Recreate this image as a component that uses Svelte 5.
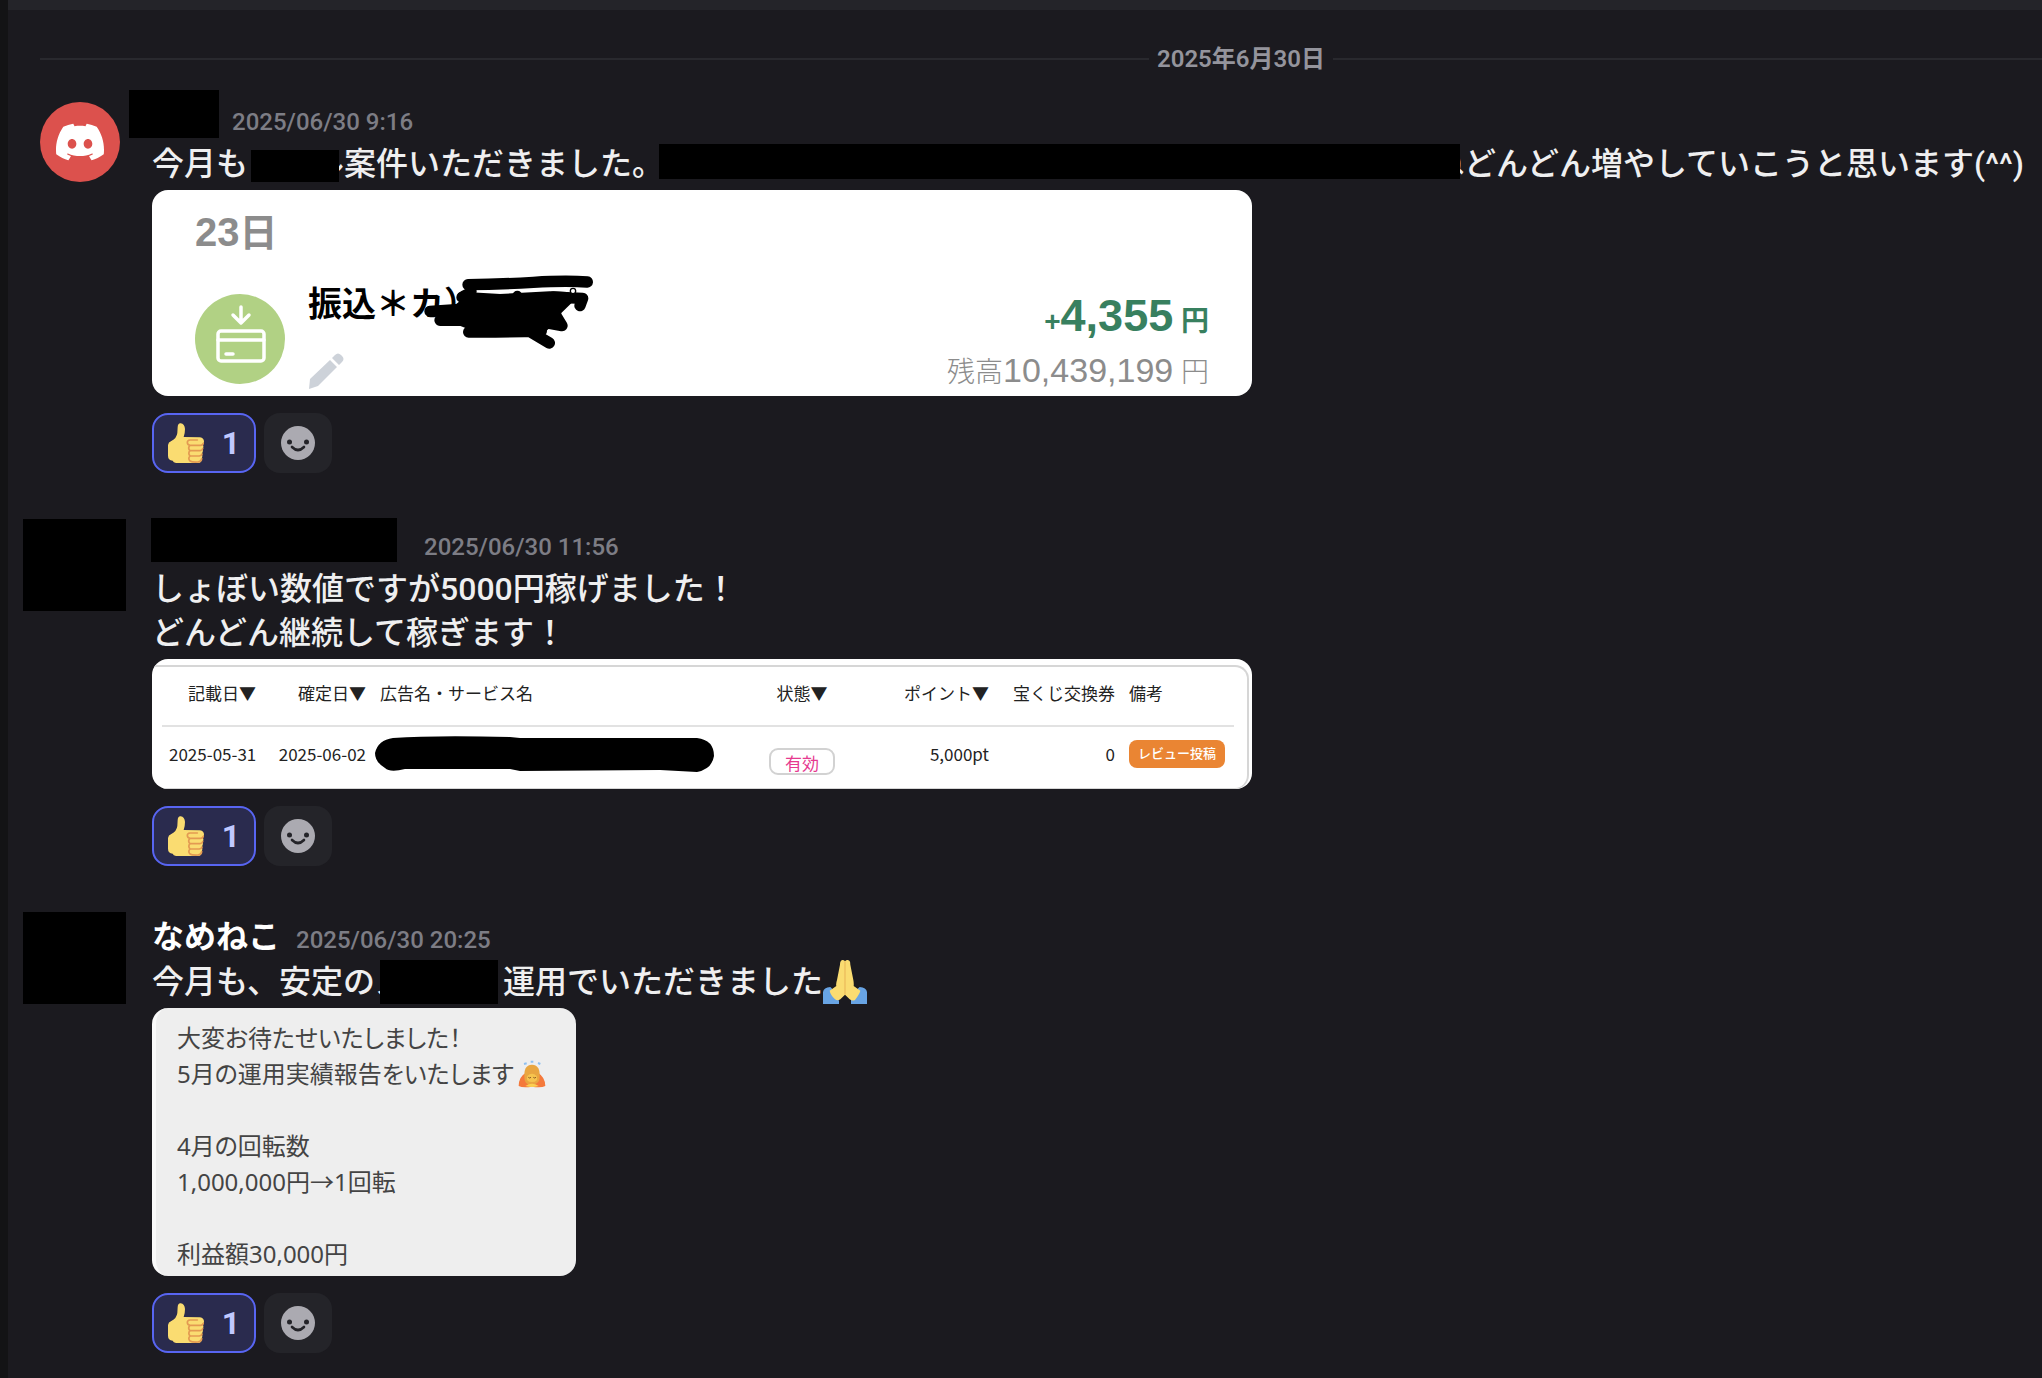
<script>
  let messages = $state([
    { id: 1, time: "2025/06/30 9:16", name: "", likes: 1 },
    { id: 2, time: "2025/06/30 11:56", name: "", likes: 1 },
    { id: 3, time: "2025/06/30 20:25", name: "なめねこ", likes: 1 },
  ]);

  const report = [
    "大変お待たせいたしました！",
    "5月の運用実績報告をいたします",
    "",
    "4月の回転数",
    "1,000,000円→1回転",
    "",
    "利益額30,000円",
  ];
</script>

{#snippet thumb()}
  <svg class="thumb" viewBox="0 0 108 120" aria-hidden="true">
    <path
      fill="#fadc71"
      d="M29 12Q30 0 38 1Q50 3 51 18Q51 32 47 42L96 43Q108 45 108 56Q107 62 105 64Q108 72 104 78Q107 86 102 92Q104 98 102 104Q103 119 90 120L24 120Q16 119 14 113Q0 112 0 98L0 66Q1 57 10 54Q26 46 28 30Z"
    />
    <path
      fill="none"
      stroke="#e39a52"
      stroke-width="5"
      stroke-linecap="round"
      d="M88 51H66Q58 52 58 58Q58 66 66 67H98Q104 67 106 61M66 67Q58 75 66 83H96Q103 82 104 77M66 83Q59 90 66 99H94Q101 98 102 93M66 99Q59 106 66 114Q72 118 90 117Q100 116 101 107"
    />
  </svg>
{/snippet}

{#snippet head(m)}
  <header class="head">
    <h2 class="name name{m.id}">{m.name}</h2>
    <time>{m.time}</time>
  </header>
{/snippet}

{#snippet reactions(m)}
  <div class="reactions">
    <button class="reaction" onclick={() => m.likes++}>
      {@render thumb()}
      <span>{m.likes}</span>
    </button>
    <button class="add" aria-label="リアクションを付ける">
      <svg viewBox="0 0 34 34" width="34" height="34">
        <circle cx="17" cy="17" r="17" fill="#abaab1" />
        <circle cx="8.5" cy="16" r="2.5" fill="#242429" />
        <circle cx="25.5" cy="16" r="2.5" fill="#242429" />
        <path d="M11 21q6 6 12 0" fill="none" stroke="#242429" stroke-width="2.6" stroke-linecap="round" />
      </svg>
    </button>
  </div>
{/snippet}

<main>
  <div class="divider"><span>2025年6月30日</span></div>

  <article class="message">
    <div class="avatar discord">
      <svg viewBox="0 0 24 24" width="48" height="48" fill="#fff">
        <path
          d="M20.317 4.3698a19.7913 19.7913 0 00-4.8851-1.5152.0741.0741 0 00-.0785.0371c-.211.3753-.4447.8648-.6083 1.2495-1.8447-.2762-3.68-.2762-5.4868 0-.1636-.3933-.4058-.8742-.6177-1.2495a.077.077 0 00-.0785-.037 19.7363 19.7363 0 00-4.8852 1.515.0699.0699 0 00-.0321.0277C.5334 9.0458-.319 13.5799.0992 18.0578a.0824.0824 0 00.0312.0561c2.0528 1.5076 4.0413 2.4228 5.9929 3.0294a.0777.0777 0 00.0842-.0276c.4616-.6304.8731-1.2952 1.226-1.9942a.076.076 0 00-.0416-.1057c-.6528-.2476-1.2743-.5495-1.8722-.8923a.077.077 0 01-.0076-.1277c.1258-.0943.2517-.1923.3718-.2914a.0743.0743 0 01.0776-.0105c3.9278 1.7933 8.18 1.7933 12.0614 0a.0739.0739 0 01.0785.0095c.1202.099.246.1981.3728.2924a.077.077 0 01-.0066.1276 12.2986 12.2986 0 01-1.873.8914.0766.0766 0 00-.0407.1067c.3604.698.7719 1.3628 1.225 1.9932a.076.076 0 00.0842.0286c1.961-.6067 3.9495-1.5219 6.0023-3.0294a.077.077 0 00.0313-.0552c.5004-5.177-.8382-9.6739-3.5485-13.6604a.061.061 0 00-.0312-.0286zM8.02 15.3312c-1.1825 0-2.1569-1.0857-2.1569-2.419 0-1.3332.9555-2.4189 2.157-2.4189 1.2108 0 2.1757 1.0952 2.1568 2.419 0 1.3332-.9555 2.4189-2.1569 2.4189zm7.9748 0c-1.1825 0-2.1569-1.0857-2.1569-2.419 0-1.3332.9554-2.4189 2.1569-2.4189 1.2108 0 2.1757 1.0952 2.1568 2.419 0 1.3332-.946 2.4189-2.1568 2.4189Z"
        />
      </svg>
    </div>
    <div class="body">
      {@render head(messages[0])}
      <p>今月も<span class="bar bar-short"></span>ル案件いただきました。<span class="bar bar-long"></span>ねどんどん増やしていこうと思います(^^)</p>
      <section class="attachment deposit">
        <h3>23<span>日</span></h3>
        <div class="deposit-row">
          <svg class="card-icon" viewBox="0 0 90 90" fill="none" stroke="#fff" stroke-width="3.5" stroke-linecap="round" stroke-linejoin="round">
            <circle cx="45" cy="45" r="45" fill="#b1d184" stroke="none" />
            <path d="M46 13v15M38 21l8 8 8-8" />
            <rect x="23" y="37" width="46" height="30" rx="3" />
            <path d="M23 46h46M31 60h7" />
          </svg>
          <div class="payee">
            <div class="payee-name">
              振込＊カ）
              <svg class="scribble" viewBox="60 30 540 240" fill="none" stroke="#000" stroke-width="34" stroke-linecap="round" stroke-linejoin="round">
                <path d="M204 65Q300 64 400 58T562 57" />
                <path d="M186 103L300 110L450 102L548 106L540 128" />
                <path d="M90 145L200 138L300 128L470 116" />
                <path d="M120 172H300L460 145L486 188L400 172" />
                <path d="M206 207Q300 208 424 204L300 185M380 200L448 240" />
                <path d="M190 98L215 85M352 98L352 104M460 100L500 102" stroke-width="30" />
                <path d="M190 105H530L484 150 478 170 436 206 210 200 120 165Z" fill="#000" stroke="none" />
                <circle cx="519" cy="84" r="8" stroke-width="4" fill="#fff" />
              </svg>
            </div>
            <svg class="pencil" viewBox="0 0 36 36" fill="#cdd2d9">
              <path d="M22 7l7 7L10 33 1 36l1-10zM24 5l3-3q3-3 6 0l1 1q3 3 0 6l-3 3z" />
            </svg>
          </div>
          <div class="amounts">
            <div class="amount"><small>+</small>4,355<span>&nbsp;円</span></div>
            <div class="balance"><span>残高</span>10,439,199<span>&nbsp;円</span></div>
          </div>
        </div>
      </section>
      {@render reactions(messages[0])}
    </div>
  </article>

  <article class="message">
    <div class="avatar hidden"></div>
    <div class="body">
      {@render head(messages[1])}
      <p>しょぼい数値ですが5000円稼げました！<br />どんどん継続して稼ぎます！</p>
      <section class="attachment points">
        <div class="points-inner">
          <table>
            <thead>
              <tr>
                <th class="c1">記載日▼</th>
                <th class="c2">確定日▼</th>
                <th class="c3 left">広告名・サービス名</th>
                <th class="c4 center">状態▼</th>
                <th class="c5">ポイント▼</th>
                <th class="c6">宝くじ交換券</th>
                <th class="c7 left">備考</th>
              </tr>
            </thead>
            <tbody>
              <tr>
                <td>2025-05-31</td>
                <td>2025-06-02</td>
                <td class="left service">
                  <svg viewBox="0 0 339 36" width="339" height="36">
                    <path d="M18 2Q60-1 135 1L145 2H285L322 2Q339 4 339 20Q337 33 322 36L285 34L145 35L135 33H30Q15 37 10 32Q0 26 0 17Q3 4 18 2Z" />
                  </svg>
                </td>
                <td class="center"><span class="status">有効</span></td>
                <td>5,000pt</td>
                <td>0</td>
                <td class="left"><button class="review">レビュー投稿</button></td>
              </tr>
            </tbody>
          </table>
        </div>
      </section>
      {@render reactions(messages[1])}
    </div>
  </article>

  <article class="message">
    <div class="avatar hidden"></div>
    <div class="body">
      {@render head(messages[2])}
      <p>今月も、安定のス<span class="bar bar-mid"></span>運用でいただきました<svg class="pray" viewBox="0 0 132 132" width="44" height="44">
          <path fill="#68a4e4" d="M0 132V96Q2 82 22 81L46 104V132H36Q42 126 48 120V132ZM132 132V96Q130 82 110 81L84 104V132Z" />
          <path fill="#fadc71" d="M66 4Q71-3 79 2Q82 4 82 14L91 60Q93 70 92 78L112 92Q112 98 96 120Q88 124 80 118L66 104L52 118Q44 124 36 118Q22 104 20 92L40 78Q38 72 42 60L51 14Q51 2 58 0Q64 0 66 4Z" />
          <path fill="none" stroke="#e8b357" stroke-width="3" d="M66 4V104" />
        </svg></p>
      <section class="attachment report">
        {#each report as line, i}
          <div class="line">
            {line}{#if i == 1}<svg class="bow" viewBox="0 0 84 84" width="28" height="28">
                <path d="M18 12l8-2M38 5h8M60 9l7 3" stroke="#8fc0f0" stroke-width="6" />
                <path d="M2 78Q2 50 24 38L42 60 60 38Q82 52 82 78Q70 84 42 80Q14 84 2 78Z" fill="#f4793b" />
                <path d="M20 60Q14 14 42 14T64 60Q60 72 42 74T20 60Z" fill="#e9a640" />
                <path d="M28 48Q42 34 56 48Q62 66 42 66T28 48Z" fill="#f6c44e" />
                <path d="M31 52q4 4 8 0M46 52q4 4 8 0" fill="none" stroke="#8a5a28" stroke-width="3" />
                <path d="M22 78Q42 64 62 78Q42 84 22 78Z" fill="#fbcf50" />
              </svg>{/if}
          </div>
        {/each}
      </section>
      {@render reactions(messages[2])}
    </div>
  </article>
</main>

<style>
  :global(body) {
    margin: 0;
    background: #1b1a1f;
  }
  main {
    border-left: 8px solid #131315;
    box-shadow: inset 0 10px #242429;
    min-height: 100vh;
    box-sizing: border-box;
    padding: 37px 0 0 32px;
    background: #1b1a1f;
    color: #efeff0;
    font-family: Roboto, "Noto Sans CJK JP", sans-serif;
    overflow: hidden;
  }
  .divider {
    display: flex;
    align-items: center;
    gap: 8px;
    height: 44px;
    font-size: 24px;
    font-weight: 600;
    color: #94949c;
  }
  .divider span {
    padding-bottom: 6px;
  }
  .divider::before,
  .divider::after {
    content: "";
    flex: 61;
    height: 2px;
    background: #29292e;
  }
  .divider::after {
    flex: 39;
  }

  .message {
    display: flex;
    gap: 32px;
    margin-bottom: 48px;
  }
  .divider + .message {
    margin-top: 15px;
  }
  .avatar {
    flex: none;
    width: 80px;
    height: 80px;
    margin-top: 6px;
    position: relative;
  }
  .discord {
    display: grid;
    place-items: center;
    border-radius: 50%;
    background: #dc514d;
  }
  .hidden::after {
    content: "";
    position: absolute;
    inset: -8px -6px -4px -17px;
    background: #000;
  }
  .body {
    flex: 1;
    min-width: 0;
  }

  .head {
    display: flex;
    align-items: baseline;
    gap: 16px;
    height: 46px;
  }
  .name {
    position: relative;
    margin: 0;
    height: 46px;
    font-size: 32px;
    line-height: 46px;
    font-weight: 600;
    color: #fff;
  }
  .name:empty::before {
    content: "\200b";
  }
  .name1 {
    width: 64px;
  }
  .name2 {
    width: 256px;
  }
  /* masked user names */
  .name1::after,
  .name2::after {
    content: "";
    position: absolute;
    background: #000;
    inset: -6px -3px 4px -23px;
  }
  .name2::after {
    inset: -3px 11px 5px -1px;
  }
  time {
    font-size: 24px;
    font-weight: 500;
    color: #7d7d85;
  }
  p {
    margin: 0;
    font-size: 32px;
    line-height: 44px;
    font-weight: 500;
    white-space: nowrap;
  }
  .bar {
    display: inline-block;
    position: relative;
    vertical-align: top;
    background: #000;
  }
  .bar-short {
    width: 88px;
    height: 32px;
    margin: 8px -27px 0 3px;
  }
  .bar-long {
    width: 801px;
    height: 35px;
    margin: 2px -28px 0 -5px;
  }
  .bar-mid {
    width: 118px;
    height: 44px;
    margin: 0 5px 0 -27px;
  }
  .pray {
    vertical-align: top;
  }

  .attachment {
    box-sizing: border-box;
    width: 1100px;
    max-width: 100%;
    margin-top: 4px;
    border-radius: 16px;
    overflow: hidden;
    background: #fff;
  }

  .deposit {
    height: 206px;
    padding: 17px 43px 0;
    color: #8c8c8c;
    font-family: "Liberation Sans", "Noto Sans CJK JP", sans-serif;
  }
  .deposit h3 {
    margin: 0 0 28px;
    font-size: 40px;
    line-height: 50px;
  }
  .deposit h3 span {
    font-size: 38px;
  }
  .deposit-row {
    display: flex;
    gap: 23px;
  }
  .card-icon {
    width: 90px;
    height: 90px;
    margin-top: 8px;
  }
  .payee {
    flex: 1;
  }
  .payee-name {
    position: relative;
    font-family: "Noto Sans CJK JP", sans-serif;
    font-size: 34px;
    line-height: 32px;
    font-weight: bold;
    color: #000;
  }
  .scribble {
    position: absolute;
    left: 112px;
    top: -13px;
    width: 180px;
    height: 80px;
  }
  .pencil {
    display: block;
    width: 36px;
    height: 36px;
    margin-top: 35px;
  }
  .amounts {
    text-align: right;
  }
  .amount {
    height: 60px;
    font-size: 45px;
    line-height: 60px;
    font-weight: bold;
    color: #38805f;
  }
  .amount small,
  .amount span,
  .balance span {
    font-size: 28px;
  }
  .balance {
    font-size: 34px;
    line-height: 48px;
  }
  .balance span {
    font-weight: 300;
  }

  .points {
    height: 130px;
    padding: 6px 3px 0 0;
    color: #222;
    font-family: "Noto Sans CJK JP", sans-serif;
    font-size: 17px;
  }
  .points-inner {
    box-sizing: border-box;
    height: 124px;
    padding: 0 13px 0 10px;
    border: solid #d6d6d6;
    border-width: 2px 2px 1px 0;
    border-radius: 0 14px 14px 0;
  }
  table {
    width: 100%;
    table-layout: fixed;
    border-collapse: collapse;
  }
  th,
  td {
    padding: 0 7px;
    font-weight: normal;
    text-align: right;
    white-space: nowrap;
    line-height: 24px;
  }
  th {
    height: 51px;
    padding-bottom: 7px;
    border-bottom: 2px solid #e2e2e2;
    box-sizing: content-box;
  }
  td {
    height: 54px;
  }
  .left {
    text-align: left;
  }
  .center {
    text-align: center;
  }
  .c1 {
    width: 87px;
  }
  .c2 {
    width: 96px;
  }
  .c3 {
    width: 364px;
  }
  .c4 {
    width: 88px;
  }
  .c5 {
    width: 129px;
  }
  .c6 {
    width: 112px;
  }
  .service {
    padding-left: 2px;
  }
  .service svg,
  .review {
    display: block;
  }
  .status {
    display: inline-block;
    box-sizing: border-box;
    width: 66px;
    height: 27px;
    margin-top: 14px;
    border: 2px solid #d2d2d2;
    border-radius: 9px;
    line-height: 26px;
    color: #e6398f;
  }
  .review {
    width: 96px;
    height: 28px;
    padding: 0 0 3px;
    border: 0;
    border-radius: 8px;
    background: #ea8533;
    color: #fff;
    font-family: inherit;
    font-size: 13px;
    font-weight: 500;
  }

  .report {
    width: 424px;
    height: 268px;
    padding: 12px 0 0 21px;
    border-left: 4px solid #fafafa;
    background: #eee;
    color: #444;
    font-family: "Noto Sans", "Noto Sans CJK JP", sans-serif;
    font-size: 24px;
    font-feature-settings: "palt";
  }
  .line {
    display: flex;
    align-items: center;
    gap: 4px;
    height: 36px;
    line-height: 36px;
    white-space: nowrap;
  }

  .reactions {
    display: flex;
    gap: 8px;
    margin-top: 17px;
  }
  .reaction,
  .add {
    display: flex;
    align-items: center;
    justify-content: center;
    box-sizing: border-box;
    height: 60px;
    border: 0;
    border-radius: 16px;
    cursor: pointer;
  }
  .reaction {
    gap: 18px;
    width: 104px;
    padding: 0;
    border: 2px solid #5865f2;
    background: #2a2b4e;
    color: #c0c9ff;
    font-family: Roboto, sans-serif;
    font-size: 32px;
    font-weight: bold;
  }
  .thumb {
    width: 36px;
    height: 40px;
  }
  .add {
    width: 68px;
    background: #242429;
  }
</style>
